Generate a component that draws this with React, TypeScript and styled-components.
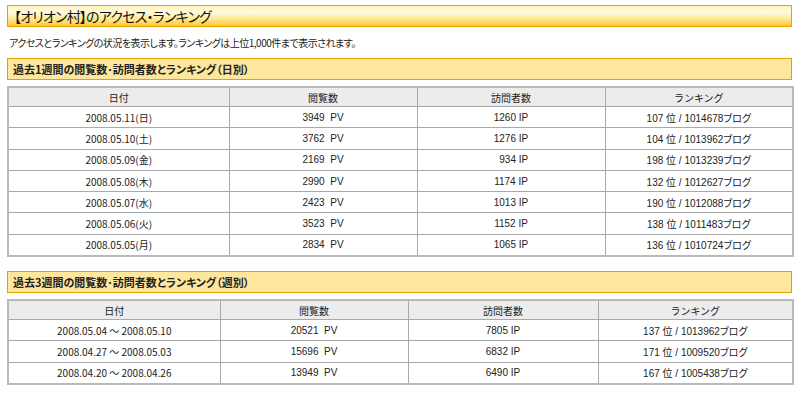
import * as React from 'react'
import styled, { createGlobalStyle } from 'styled-components'

const GlobalStyle = createGlobalStyle`
  html, body {
    margin: 0;
    padding: 0;
    background: #fff;
  }
  body {
    font-family: 'Liberation Sans', 'Noto Sans CJK JP', sans-serif;
    color: #222;
  }
`

const Page = styled.div`
  width: 785px;
  padding: 5px 8px 0 7px;
`

const TitleBar = styled.h1`
  margin: 0;
  height: 20px;
  display: flex;
  align-items: center;
  padding: 0 6px;
  border: 1px solid #ee9f00;
  background: linear-gradient(
    to bottom,
    #fff1b5 0%,
    #fffbe6 30%,
    #ffe98c 65%,
    #fdc834 100%
  );
  font-family: 'Noto Sans CJK JP', sans-serif;
  font-feature-settings: 'palt';
  font-weight: 400;
  font-size: 14px;
  letter-spacing: -0.8px;
  color: #111;
`

const Description = styled.p`
  margin: 0;
  height: 31px;
  display: flex;
  align-items: center;
  padding: 0 2px;
  font-family: 'Noto Sans CJK JP', sans-serif;
  font-feature-settings: 'palt';
  font-size: 10px;
  letter-spacing: -0.5px;
  color: #222;
`

const SectionHead = styled.h2`
  margin: 0 0 6px;
  height: 20px;
  display: flex;
  align-items: center;
  padding: 0 5px;
  border: 1px solid #e5a200;
  background: #fee69d;
  font-family: 'Noto Sans CJK JP', sans-serif;
  font-feature-settings: 'palt';
  font-weight: 700;
  font-size: 11px;
  color: #222;
`

const Table = styled.table<{ $gap: number }>`
  width: 785px;
  border-collapse: collapse;
  table-layout: fixed;
  border: 2px solid #b9b9b9;
  margin-bottom: ${(props) => props.$gap}px;
  font-size: 10px;
  color: #222;

  th,
  td {
    height: 20.3px;
    padding: 0;
    border: 1px solid #a9a9a9;
    text-align: center;
    white-space: pre;
    font-weight: 400;
  }

  th {
    height: 18px;
    background: #ececec;
    font-family: 'Noto Sans CJK JP', sans-serif;
  }

  td {
    background: #fff;
  }
`

const Jp = styled.span`
  font-family: 'Noto Sans CJK JP', sans-serif;
  font-feature-settings: 'palt';
`

interface Row {
  date: string
  pv: string
  ip: string
  rank: string
  total: string
}

const daily: Row[] = [
  { date: '2008.05.11(日)', pv: '3949', ip: '1260', rank: '107', total: '1014678' },
  { date: '2008.05.10(土)', pv: '3762', ip: '1276', rank: '104', total: '1013962' },
  { date: '2008.05.09(金)', pv: '2169', ip: '\u2007934', rank: '198', total: '1013239' },
  { date: '2008.05.08(木)', pv: '2990', ip: '1174', rank: '132', total: '1012627' },
  { date: '2008.05.07(水)', pv: '2423', ip: '1013', rank: '190', total: '1012088' },
  { date: '2008.05.06(火)', pv: '3523', ip: '1152', rank: '138', total: '1011483' },
  { date: '2008.05.05(月)', pv: '2834', ip: '1065', rank: '136', total: '1010724' },
]

const weekly: Row[] = [
  { date: '2008.05.04 ～ 2008.05.10', pv: '20521', ip: '7805', rank: '137', total: '1013962' },
  { date: '2008.04.27 ～ 2008.05.03', pv: '15696', ip: '6832', rank: '171', total: '1009520' },
  { date: '2008.04.20 ～ 2008.04.26', pv: '13949', ip: '6490', rank: '167', total: '1005438' },
]

const StatsTable = ({ rows, widths, gap }: { rows: Row[]; widths: number[]; gap: number }) => (
  <Table $gap={gap}>
    <colgroup>
      {widths.map((w, i) => (
        <col key={i} style={{ width: w }} />
      ))}
    </colgroup>
    <thead>
      <tr>
        <th>日付</th>
        <th>閲覧数</th>
        <th>訪問者数</th>
        <th>ランキング</th>
      </tr>
    </thead>
    <tbody>
      {rows.map((r) => (
        <tr key={r.date}>
          <td>
            <Jp>{r.date}</Jp>
          </td>
          <td>{`${r.pv}  PV`}</td>
          <td>{`${r.ip} IP`}</td>
          <td>
            {`${r.rank} `}
            <Jp>位</Jp>
            {` / ${r.total}`}
            <Jp>ブログ</Jp>
          </td>
        </tr>
      ))}
    </tbody>
  </Table>
)

export default function App() {
  return (
    <>
      <GlobalStyle />
      <Page>
        <TitleBar>【オリオン村】のアクセス・ランキング</TitleBar>
        <Description>
          アクセスとランキングの状況を表示します。ランキングは上位1,000件まで表示されます。
        </Description>
        <SectionHead>過去1週間の閲覧数･訪問者数とランキング（日別）</SectionHead>
        <StatsTable rows={daily} widths={[221, 188, 188, 188]} gap={14} />
        <SectionHead>過去3週間の閲覧数･訪問者数とランキング（週別）</SectionHead>
        <StatsTable rows={weekly} widths={[212, 188, 190, 195]} gap={0} />
      </Page>
    </>
  )
}
